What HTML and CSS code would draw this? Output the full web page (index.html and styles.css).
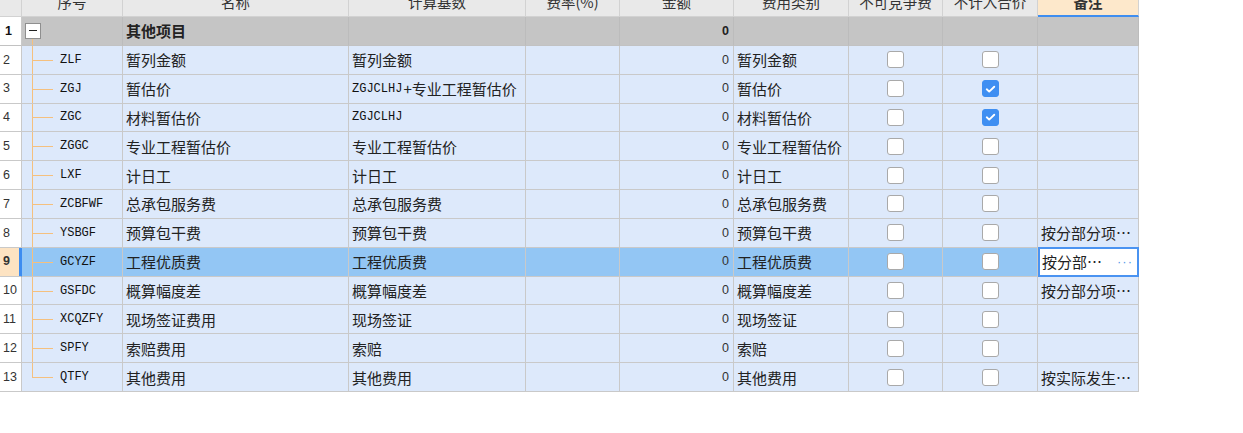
FILE: index.html
```html
<!DOCTYPE html>
<html lang="zh">
<head>
<meta charset="utf-8">
<link rel="stylesheet" href="styles.css">
</head>
<body>
<div class="viewport">
  <div class="table">
    <div class="row head">
      <div class="c"></div>
      <div class="c">序号</div>
      <div class="c">名称</div>
      <div class="c">计算基数</div>
      <div class="c">费率(%)</div>
      <div class="c">金额</div>
      <div class="c">费用类别</div>
      <div class="c">不可竞争费</div>
      <div class="c">不计入合价</div>
      <div class="c active">备注</div>
    </div>

    <div class="row group">
      <div class="c num bold">1</div>
      <div class="c tree root"><span class="toggle"></span></div>
      <div class="c bold">其他项目</div>
      <div class="c"></div>
      <div class="c"></div>
      <div class="c amt bold">0</div>
      <div class="c"></div>
      <div class="c"></div>
      <div class="c"></div>
      <div class="c"></div>
    </div>

    <div class="row">
      <div class="c num">2</div>
      <div class="c tree code">ZLF</div>
      <div class="c">暂列金额</div>
      <div class="c">暂列金额</div>
      <div class="c"></div>
      <div class="c amt">0</div>
      <div class="c">暂列金额</div>
      <div class="c chk"><span class="box"></span></div>
      <div class="c chk"><span class="box"></span></div>
      <div class="c"></div>
    </div>

    <div class="row">
      <div class="c num">3</div>
      <div class="c tree code">ZGJ</div>
      <div class="c">暂估价</div>
      <div class="c"><span class="mono">ZGJCLHJ</span>+专业工程暂估价</div>
      <div class="c"></div>
      <div class="c amt">0</div>
      <div class="c">暂估价</div>
      <div class="c chk"><span class="box"></span></div>
      <div class="c chk"><span class="box on"><svg viewBox="0 0 16 16" width="16" height="16"><path d="M4 8.3l2.6 2.5L12 5.6" fill="none" stroke="#fff" stroke-width="2" stroke-linecap="round" stroke-linejoin="round"/></svg></span></div>
      <div class="c"></div>
    </div>

    <div class="row">
      <div class="c num">4</div>
      <div class="c tree code">ZGC</div>
      <div class="c">材料暂估价</div>
      <div class="c"><span class="mono">ZGJCLHJ</span></div>
      <div class="c"></div>
      <div class="c amt">0</div>
      <div class="c">材料暂估价</div>
      <div class="c chk"><span class="box"></span></div>
      <div class="c chk"><span class="box on"><svg viewBox="0 0 16 16" width="16" height="16"><path d="M4 8.3l2.6 2.5L12 5.6" fill="none" stroke="#fff" stroke-width="2" stroke-linecap="round" stroke-linejoin="round"/></svg></span></div>
      <div class="c"></div>
    </div>

    <div class="row">
      <div class="c num">5</div>
      <div class="c tree code">ZGGC</div>
      <div class="c">专业工程暂估价</div>
      <div class="c">专业工程暂估价</div>
      <div class="c"></div>
      <div class="c amt">0</div>
      <div class="c">专业工程暂估价</div>
      <div class="c chk"><span class="box"></span></div>
      <div class="c chk"><span class="box"></span></div>
      <div class="c"></div>
    </div>

    <div class="row">
      <div class="c num">6</div>
      <div class="c tree code">LXF</div>
      <div class="c">计日工</div>
      <div class="c">计日工</div>
      <div class="c"></div>
      <div class="c amt">0</div>
      <div class="c">计日工</div>
      <div class="c chk"><span class="box"></span></div>
      <div class="c chk"><span class="box"></span></div>
      <div class="c"></div>
    </div>

    <div class="row">
      <div class="c num">7</div>
      <div class="c tree code">ZCBFWF</div>
      <div class="c">总承包服务费</div>
      <div class="c">总承包服务费</div>
      <div class="c"></div>
      <div class="c amt">0</div>
      <div class="c">总承包服务费</div>
      <div class="c chk"><span class="box"></span></div>
      <div class="c chk"><span class="box"></span></div>
      <div class="c"></div>
    </div>

    <div class="row">
      <div class="c num">8</div>
      <div class="c tree code">YSBGF</div>
      <div class="c">预算包干费</div>
      <div class="c">预算包干费</div>
      <div class="c"></div>
      <div class="c amt">0</div>
      <div class="c">预算包干费</div>
      <div class="c chk"><span class="box"></span></div>
      <div class="c chk"><span class="box"></span></div>
      <div class="c">按分部分项⋯</div>
    </div>

    <div class="row selected">
      <div class="c num bold">9</div>
      <div class="c tree code">GCYZF</div>
      <div class="c">工程优质费</div>
      <div class="c">工程优质费</div>
      <div class="c"></div>
      <div class="c amt">0</div>
      <div class="c">工程优质费</div>
      <div class="c chk"><span class="box"></span></div>
      <div class="c chk"><span class="box"></span></div>
      <div class="c editing">按分部⋯<span class="more">···</span></div>
    </div>

    <div class="row">
      <div class="c num">10</div>
      <div class="c tree code">GSFDC</div>
      <div class="c">概算幅度差</div>
      <div class="c">概算幅度差</div>
      <div class="c"></div>
      <div class="c amt">0</div>
      <div class="c">概算幅度差</div>
      <div class="c chk"><span class="box"></span></div>
      <div class="c chk"><span class="box"></span></div>
      <div class="c">按分部分项⋯</div>
    </div>

    <div class="row">
      <div class="c num">11</div>
      <div class="c tree code">XCQZFY</div>
      <div class="c">现场签证费用</div>
      <div class="c">现场签证</div>
      <div class="c"></div>
      <div class="c amt">0</div>
      <div class="c">现场签证</div>
      <div class="c chk"><span class="box"></span></div>
      <div class="c chk"><span class="box"></span></div>
      <div class="c"></div>
    </div>

    <div class="row">
      <div class="c num">12</div>
      <div class="c tree code">SPFY</div>
      <div class="c">索赔费用</div>
      <div class="c">索赔</div>
      <div class="c"></div>
      <div class="c amt">0</div>
      <div class="c">索赔</div>
      <div class="c chk"><span class="box"></span></div>
      <div class="c chk"><span class="box"></span></div>
      <div class="c"></div>
    </div>

    <div class="row last">
      <div class="c num">13</div>
      <div class="c tree code">QTFY</div>
      <div class="c">其他费用</div>
      <div class="c">其他费用</div>
      <div class="c"></div>
      <div class="c amt">0</div>
      <div class="c">其他费用</div>
      <div class="c chk"><span class="box"></span></div>
      <div class="c chk"><span class="box"></span></div>
      <div class="c">按实际发生⋯</div>
    </div>
  </div>
</div>
</body>
</html>
```

FILE: styles.css
```css
* { box-sizing: border-box; }

html, body {
  margin: 0;
  padding: 0;
  background: #ffffff;
}

body {
  font-family: "Noto Sans CJK SC", "Noto Sans", sans-serif;
  font-size: 15px;
  color: #222222;
}

.viewport {
  width: 1243px;
  height: 433px;
  overflow: hidden;
}

.table {
  width: 1139px;
  display: flex;
  flex-direction: column;
  margin-top: -11px;
}

.row {
  display: grid;
  grid-template-columns: 22px 101px 226px 177px 94px 114px 115px 94px 95px 101px;
  height: 28.85px;
  background: #dde9fb;
}

.c {
  position: relative;
  display: flex;
  align-items: center;
  padding: 0 3px;
  border-right: 1px solid #c9c9c9;
  border-bottom: 1px solid #c9c9c9;
  white-space: nowrap;
  overflow: hidden;
  line-height: 1;
}

/* header */
.row.head {
  height: 28px;
  background: #e9e9e9;
}
.head .c {
  justify-content: center;
  font-size: 14.5px;
  color: #333333;
  border-right-color: #d2d2d2;
  border-bottom-color: #d2d2d2;
}
.head .c.active {
  background: #fde8cb;
  font-weight: bold;
  border-bottom: 2px solid #3f8ef0;
}

/* group row */
.row.group {
  background: #c5c5c5;
}
.group .c {
  border-right-color: #bcbcbc;
  border-bottom-color: #c2c2c2;
}
.bold { font-weight: bold; }

/* row number column */
.c.num {
  background: #ffffff;
  font-family: "Liberation Sans", "DejaVu Sans", sans-serif;
  font-size: 12.5px;
  color: #333333;
  padding-left: 3px;
  border-right-color: #c9c9c9;
}
.group .c.num { color: #111111; padding-left: 5px; }

/* code column */
.c.code {
  font-family: "Liberation Mono", "DejaVu Sans Mono", monospace;
  font-size: 12px;
  color: #111111;
  padding-left: 38px;
}
.mono {
  font-family: "Liberation Mono", "DejaVu Sans Mono", monospace;
  font-size: 12px;
  color: #111111;
  margin-right: 1px;
}

/* tree guides */
.tree::before {
  content: "";
  position: absolute;
  left: 10px;
  top: 0;
  bottom: -1px;
  width: 1px;
  background: #f5c07e;
}
.tree.code::after {
  content: "";
  position: absolute;
  left: 10px;
  top: 50%;
  width: 21px;
  height: 1px;
  background: #f5c07e;
}
.last .tree::before {
  bottom: auto;
  height: 50%;
}
.tree.root::before {
  top: calc(50% + 7px);
}

.toggle {
  position: relative;
  z-index: 1;
  width: 16px;
  height: 16px;
  border: 1px solid #8f8f8f;
  background: #ffffff;
  display: flex;
  align-items: center;
  justify-content: center;
}
.toggle::before {
  content: "";
  width: 8px;
  height: 1px;
  background: #222222;
}

/* amount */
.c.amt {
  justify-content: flex-end;
  font-family: "Liberation Sans", "DejaVu Sans", sans-serif;
  font-size: 12.5px;
  color: #333333;
  padding-right: 4px;
}
.group .c.amt { color: #222222; }

/* checkboxes */
.c.chk {
  justify-content: center;
  padding: 0;
}
.box {
  width: 17px;
  height: 17px;
  border: 1px solid #a9a9a9;
  border-radius: 3px;
  background: #ffffff;
  display: flex;
  align-items: center;
  justify-content: center;
}
.box.on {
  background: #3f8ff2;
  border-color: #3f8ff2;
}
.box.on svg { display: block; }

/* selected row */
.row.selected {
  background: #93c6f4;
}
.selected .c.num {
  background: #fde3c2;
  box-shadow: inset -2px 0 0 #3d8cf0;
  border-right-color: #3d8cf0;
}
.c.editing {
  background: #ffffff;
  border: 2px solid #4a93f1;
  padding-left: 2px;
  padding-right: 4px;
  margin: -1px 0 0 0;
}
.more {
  margin-left: auto;
  color: #5a9bea;
  font-family: "Liberation Sans", sans-serif;
  font-size: 13px;
  letter-spacing: 1px;
}
```
